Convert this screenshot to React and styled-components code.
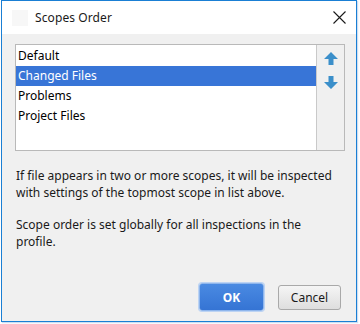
import styled, { createGlobalStyle } from "styled-components";

const GlobalStyle = createGlobalStyle`
  html, body {
    margin: 0;
    padding: 0;
    background: #ffffff;
  }
  body {
    font-family: "Noto Sans", "Open Sans", sans-serif;
  }
`;

const Screen = styled.div`
  width: 360px;
  height: 324px;
  padding: 0 3px 2px 1px;
  box-sizing: border-box;
`;

const Window = styled.div`
  width: 100%;
  height: 100%;
  box-sizing: border-box;
  border: 1px solid #1a7fd4;
  background: #f0f0f0;
  display: flex;
  flex-direction: column;
  box-shadow: 1px 1px 1px rgba(60, 120, 200, 0.25);
`;

const TitleBar = styled.div`
  height: 33px;
  background: #ffffff;
  display: flex;
  align-items: center;
  padding: 0 10px 0 10px;
  flex-shrink: 0;
  .appicon {
    width: 16px;
    height: 16px;
    background: #f7f7f7;
    margin-right: 7px;
  }
  .title {
    font-size: 12px;
    color: #1a1a1a;
    flex: 1;
    letter-spacing: 0.1px;
  }
`;

const CloseButton = styled.div`
  width: 14px;
  height: 14px;
  display: flex;
  align-items: center;
  justify-content: center;
  margin-right: 0px;
`;

const Body = styled.div`
  flex: 1;
  display: flex;
  flex-direction: column;
  padding: 10px 13px 10px 13px;
`;

const ListFrame = styled.div`
  display: flex;
  height: 107px;
  border: 1px solid #b9b9b9;
  box-sizing: border-box;
  width: 330px;
`;

const List = styled.div`
  flex: 1;
  background: #ffffff;
  border-right: 1px solid #c9c9c9;
  padding-top: 1px;
`;

const Row = styled.div`
  height: 20px;
  line-height: 20px;
  font-size: 12px;
  padding-left: 2px;
  color: ${(p) => (p.selected ? "#ffffff" : "#000000")};
  background: ${(p) => (p.selected ? "#3875d7" : "transparent")};
`;

const Arrows = styled.div`
  width: 27px;
  display: flex;
  flex-direction: column;
  align-items: center;
  padding-top: 7px;
  gap: 11px;
`;

const Note = styled.p`
  margin: 0;
  font-size: 12px;
  line-height: 16.5px;
  color: #1a1a1a;
  padding-left: 1px;
  margin-top: ${(p) => p.top}px;
`;

const Footer = styled.div`
  margin-top: auto;
  display: flex;
  justify-content: flex-end;
  gap: 14px;
  padding-right: 2px;
  padding-bottom: 0px;
`;

const Button = styled.button`
  font-family: "Noto Sans", "Open Sans", sans-serif;
  font-size: 12px;
  width: ${(p) => (p.primary ? 65 : 63)}px;
  height: ${(p) => (p.primary ? 28 : 25)}px;
  align-self: center;
  border-radius: 3px;
  cursor: default;
  padding: 0;
  ${(p) =>
    p.primary
      ? `
    background: linear-gradient(#4a8ae2, #3574d4);
    border: 1px solid #8fb6ec;
    box-shadow: 0 0 0 1px #bcd3f3;
    color: #ffffff;
    font-weight: bold;
  `
      : `
    background: linear-gradient(#f5f5f5, #dedede);
    border: 1px solid #a9a9a9;
    color: #1a1a1a;
  `}
`;

function ArrowIcon({ down }) {
  return (
    <svg width="14" height="13" viewBox="0 0 14 13" style={down ? { transform: "rotate(180deg)" } : undefined}>
      <path d="M7 0 L14 7 L9.5 7 L9.5 13 L4.5 13 L4.5 7 L0 7 Z" fill="#3b8fca" />
    </svg>
  );
}

const items = ["Default", "Changed Files", "Problems", "Project Files"];

export default function App() {
  return (
    <>
      <GlobalStyle />
      <Screen>
        <Window>
          <TitleBar>
            <div className="appicon" />
            <span className="title">Scopes Order</span>
            <CloseButton>
              <svg width="13" height="13" viewBox="0 0 13 13">
                <path d="M0.5 0.5 L12.5 12.5 M12.5 0.5 L0.5 12.5" stroke="#1a1a1a" strokeWidth="1.1" />
              </svg>
            </CloseButton>
          </TitleBar>
          <Body>
            <ListFrame>
              <List>
                {items.map((it) => (
                  <Row key={it} selected={it === "Changed Files"}>
                    {it}
                  </Row>
                ))}
              </List>
              <Arrows>
                <ArrowIcon />
                <ArrowIcon down />
              </Arrows>
            </ListFrame>
            <Note top={17}>
              If file appears in two or more scopes, it will be inspected with settings of the topmost scope in list above.
            </Note>
            <Note top={16}>Scope order is set globally for all inspections in the profile.</Note>
            <Footer>
              <Button primary>OK</Button>
              <Button>Cancel</Button>
            </Footer>
          </Body>
        </Window>
      </Screen>
    </>
  );
}
